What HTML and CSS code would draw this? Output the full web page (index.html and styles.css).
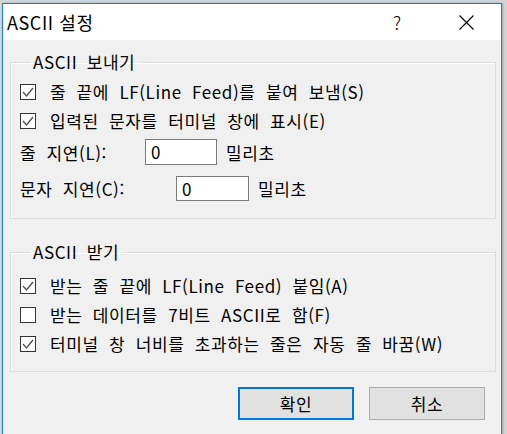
FILE: index.html
```html
<!DOCTYPE html>
<html lang="ko">
<head>
    <meta charset="UTF-8">
    <title>ASCII 설정</title>
    <link rel="stylesheet" href="styles.css">
</head>
<body>

<div class="window">
    <div class="titlebar">
        <span class="title">ASCII 설정</span>
        <span class="help">?</span>
        <span class="close">
            <svg width="15" height="15" viewBox="0 0 15 15"><path d="M0.5 0.5 L14.5 14.5 M14.5 0.5 L0.5 14.5" stroke="#000" stroke-width="1.1" fill="none"/></svg>
        </span>
    </div>

    <div class="content">
        <fieldset class="group group-send">
            <legend>ASCII 보내기</legend>
            <div class="check-row">
                <span class="box"><svg width="14" height="14" viewBox="0 0 14 14"><path d="M2 7 L5.5 11 L12 3" stroke="#555" stroke-width="1.4" fill="none"/></svg></span>
                <span>줄 끝에 LF(Line Feed)를 붙여 보냄(S)</span>
            </div>
            <div class="check-row">
                <span class="box"><svg width="14" height="14" viewBox="0 0 14 14"><path d="M2 7 L5.5 11 L12 3" stroke="#555" stroke-width="1.4" fill="none"/></svg></span>
                <span>입력된 문자를 터미널 창에 표시(E)</span>
            </div>
            <div class="delay-row">
                <span class="delay-label lbl-line">줄 지연(L):</span>
                <span class="field">0</span>
                <span class="unit">밀리초</span>
            </div>
            <div class="delay-row delay-row-last">
                <span class="delay-label lbl-char">문자 지연(C):</span>
                <span class="field">0</span>
                <span class="unit">밀리초</span>
            </div>
        </fieldset>

        <fieldset class="group group-recv">
            <legend>ASCII 받기</legend>
            <div class="check-row">
                <span class="box"><svg width="14" height="14" viewBox="0 0 14 14"><path d="M2 7 L5.5 11 L12 3" stroke="#555" stroke-width="1.4" fill="none"/></svg></span>
                <span>받는 줄 끝에 LF(Line Feed) 붙임(A)</span>
            </div>
            <div class="check-row">
                <span class="box"></span>
                <span>받는 데이터를 7비트 ASCII로 함(F)</span>
            </div>
            <div class="check-row">
                <span class="box"><svg width="14" height="14" viewBox="0 0 14 14"><path d="M2 7 L5.5 11 L12 3" stroke="#555" stroke-width="1.4" fill="none"/></svg></span>
                <span>터미널 창 너비를 초과하는 줄은 자동 줄 바꿈(W)</span>
            </div>
        </fieldset>

        <div class="buttons">
            <button class="btn btn-default">확인</button>
            <button class="btn">취소</button>
        </div>
    </div>
</div>

</body>
</html>
```

FILE: styles.css
```css
/* 대화상자 기본 스타일 */
body {
    margin: 0;
    padding: 0;
    background-color: #d4d4d4;
    font-family: "Noto Sans CJK KR", "Noto Sans", sans-serif;
    color: #000;
    overflow: hidden;
}
.window {
    margin: 3px 0 0 2px;
    width: 498px;
    height: 440px;
    border: 1px solid #1883d7;
    background-color: #f0f0f0;
    box-shadow: 1px 0 2px rgba(0, 0, 0, 0.25);
}
.titlebar {
    display: flex;
    align-items: center;
    height: 36px;
    padding-left: 4px;
    background-color: #fff;
}
.title {
    flex: 1;
    font-size: 18px;
    letter-spacing: 0.6px;
}
.help {
    width: 14px;
    margin-right: 52px;
    font-size: 18px;
    font-weight: 300;
}
.close {
    display: flex;
    margin-right: 27px;
}
.content {
    padding: 0 5px 0 7px;
}
.group {
    margin: 0;
    width: 486px;
    box-sizing: border-box;
    padding: 4px 9px 12px 9px;
    border: 1px solid #dcdcdc;
    box-shadow: inset 1px 1px 0 #fff;
}
.group legend {
    margin-left: 10px;
    padding: 0 6px 0 3px;
    font-size: 17px;
    line-height: 22px;
    word-spacing: 4px;
    letter-spacing: 0.6px;
}
.group-send {
    margin-top: 11px;
}
.group-recv {
    margin-top: 22px;
    padding-top: 8px;
    padding-bottom: 13px;
}
.check-row {
    display: flex;
    align-items: center;
    height: 29px;
    font-size: 17px;
    word-spacing: 5px;
    letter-spacing: 0.6px;
    white-space: nowrap;
}
.box {
    display: flex;
    align-items: center;
    justify-content: center;
    width: 14px;
    height: 14px;
    margin-right: 14px;
    border: 1px solid #333;
    background-color: #fff;
}
.delay-row {
    display: flex;
    align-items: center;
    height: 34px;
    font-size: 17px;
    word-spacing: 5px;
    letter-spacing: 0.6px;
    white-space: nowrap;
}
.delay-row-last {
    height: 35px;
    margin-top: 2px;
}
.lbl-line {
    width: 125px;
}
.lbl-char {
    width: 156px;
}
.field {
    box-sizing: border-box;
    width: 72px;
    height: 26px;
    padding-left: 5px;
    border: 1px solid #7a7a7a;
    background-color: #fff;
    line-height: 24px;
}
.delay-row-last .field {
    height: 25px;
    line-height: 23px;
    width: 73px;
}
.unit {
    margin-left: 9px;
}
.buttons {
    display: flex;
    justify-content: flex-end;
    gap: 15px;
    margin-top: 15px;
    padding-right: 11px;
}
.btn {
    width: 116px;
    height: 33px;
    border: 1px solid #adadad;
    background-color: #e1e1e1;
    font-family: "Noto Sans CJK KR", sans-serif;
    font-size: 17px;
    letter-spacing: 0.6px;
    color: #000;
    padding: 0;
}
.btn-default {
    border: 2px solid #0078d7;
}
```
